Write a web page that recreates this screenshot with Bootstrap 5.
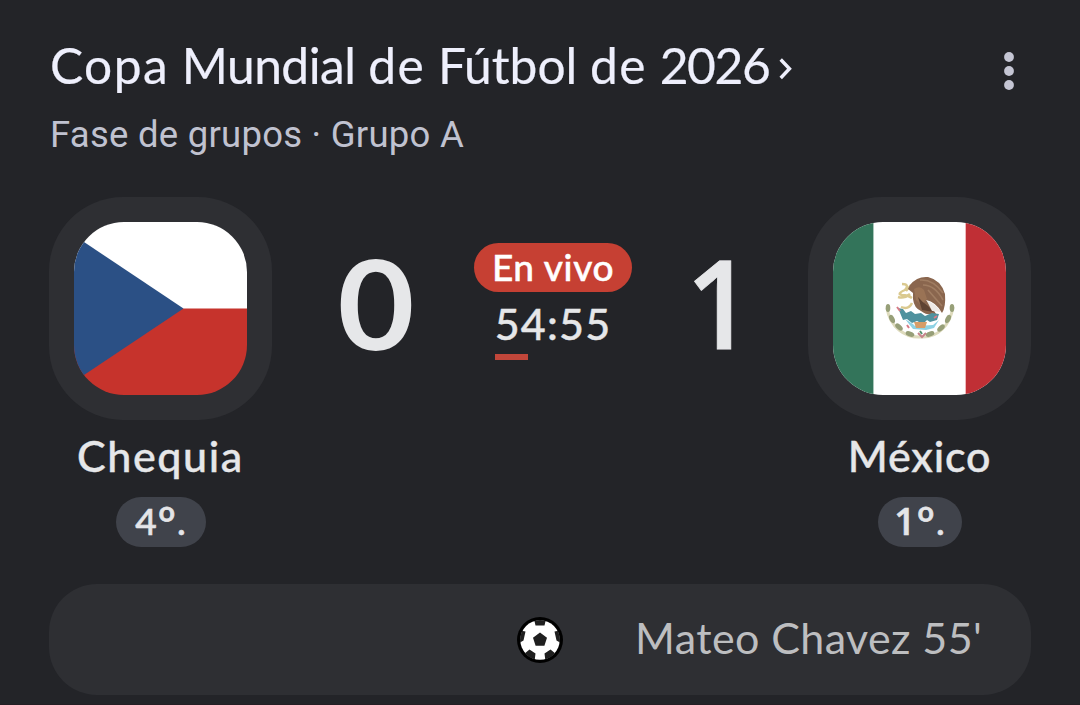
<!DOCTYPE html>
<html lang="es" data-bs-theme="dark">
<head>
<meta charset="utf-8">
<meta name="viewport" content="width=device-width, initial-scale=1">
<title>Chequia - México</title>
<link href="https://cdn.jsdelivr.net/npm/bootstrap@5.3.0/dist/css/bootstrap.min.css" rel="stylesheet">
<style>
body{background:#232428;color:#e6e7e9;font-family:Lato,"Open Sans",sans-serif;height:705px;overflow:hidden;border-bottom:1px solid #241e24}
.page-head{padding:35px 60px 0 50px}
.title{font-size:49.7px;line-height:60px;color:#eeeffc;font-weight:400;white-space:nowrap;-webkit-text-stroke:.2px}
.wide{letter-spacing:1.4px}
.tight{letter-spacing:-.5px}
.year{letter-spacing:-1.400px}
.chev{width:13px;height:24px;margin:7px 0 0 10px}
.stage{font:400 36.5px/44px Roboto,sans-serif;color:#c0c2d0;margin-top:18px;letter-spacing:.25px;white-space:nowrap}
.kebab{width:12px;height:38px;margin:17px 5px 0 0}
.match{padding:0 49px;margin-top:40px}
.team{width:223px}
.crest{width:223px;height:223px;border-radius:74px;background:#2e2f33}
.crest svg{width:173px;height:173px;border-radius:50px}
.team-name{font-size:43px;line-height:52px;margin-top:10px;font-weight:500;-webkit-text-stroke:.4px;white-space:nowrap}
.rank{height:50px;line-height:47px;font-size:37px;margin-top:15px;background:#40434b;font-weight:500;-webkit-text-stroke:.6px;color:#e4e5e8;letter-spacing:1px;text-indent:1px}
.ordinal{font-size:46px;line-height:0;vertical-align:-5px;font-weight:400;-webkit-text-stroke:.8px}
.grotesk{font-family:"Open Sans",sans-serif;font-weight:600}
.scores{padding:45px 54px 0 58px}
.goals{font-size:124px;line-height:120px;font-weight:700;width:92px}
.goals.grotesk{width:70px;line-height:118px;font-weight:600;-webkit-text-stroke:.8px}
.goals span{display:inline-block}
.goals.grotesk span{transform:scaleX(.95)}
.stretch{transform:scaleX(1.070)}
.status{width:158px;margin:1px 0 0 0}
.live{width:158px;height:49px;line-height:47px;font-size:37px;background:#c64033;color:#fff;font-weight:500;-webkit-text-stroke:.5px;letter-spacing:.6px}
.clock{font-size:43px;line-height:50px;margin-top:7px;font-weight:500;-webkit-text-stroke:.4px;letter-spacing:1.200px}
.tick{width:33px;height:6px;background:#c1463a;margin:5px 0 0 21px}
.events{height:111px;margin:37px 49px 0;border-radius:48px;background:#2e2f33}
.ball{width:46px;height:46px;margin-left:-23px}
.scorer{font-size:43px;line-height:52px;color:#bdbec0;padding:0 0 4px 72px;white-space:nowrap;letter-spacing:.4px}
</style>
</head>
<body>
<header class="page-head d-flex justify-content-between align-items-start">
  <div>
    <div class="d-flex align-items-center">
      <h1 class="title m-0"><span class="wide">Copa</span> <span class="tight">Mundial</span> <span class="wide">de</span> Fútbol <span class="wide">de</span> <span class="year">2026</span></h1>
      <svg class="chev" viewBox="0 0 13 24"><path d="M1.700 2.500L10.500 11.700L1.700 21" fill="none" stroke="#eeeffc" stroke-width="3.400"/></svg>
    </div>
    <div class="stage">Fase de grupos · Grupo A</div>
  </div>
  <svg class="kebab flex-shrink-0" viewBox="0 0 12 38" fill="#c5c6d4"><circle cx="6" cy="5" r="4.900"/><circle cx="6" cy="19" r="4.900"/><circle cx="6" cy="33" r="4.900"/></svg>
</header>
<main class="match d-flex justify-content-between">
  <section class="team d-flex flex-column align-items-center">
    <div class="crest d-flex align-items-center justify-content-center">
      <svg viewBox="0 0 173 173"><path fill="#fff" d="M0 0h173v87H0z"/><path fill="#c6332c" d="M0 86.500h173V173H0z"/><path fill="#2b5085" d="M-20 0L10 20L109.500 86.500L10 153L-20 173z"/></svg>
    </div>
    <div class="team-name" style="letter-spacing:1.6px">Chequia</div>
    <div class="rank rounded-pill text-center" style="width:90px">4<span class="ordinal">º</span>.</div>
  </section>
  <section class="scores d-flex flex-grow-1 justify-content-between align-items-start">
    <div class="goals text-center"><span class="stretch">0</span></div>
    <div class="status">
      <div class="live rounded-pill text-center">En vivo</div>
      <div class="clock text-center">54:55</div>
      <div class="tick"></div>
    </div>
    <div class="goals grotesk text-center"><span>1</span></div>
  </section>
  <section class="team d-flex flex-column align-items-center">
    <div class="crest d-flex align-items-center justify-content-center">
      <svg viewBox="0 0 173 173">
        <path fill="#fff" d="M0 0h173v173H0z"/><path fill="#33745a" d="M0 0h40v173H0z"/><path fill="#c02f35" d="M132.500 0H173v173h-40.500z"/>
        <path d="M40.500 0v173" stroke="#a9c6ba"/><path d="M132.500 0v173" stroke="#f0b9bd"/>
        <g transform="translate(42 43)">
          <path d="M12 43C15 62 30 73 46 72C62 73 75 61 78 42" fill="none" stroke="#dedbbd" stroke-width="3"/>
          <g fill="#979f78"><ellipse cx="13" cy="43" rx="2.300" ry="4"/><ellipse cx="17" cy="54" rx="2.500" ry="4.500" transform="rotate(-25 17 54)"/><ellipse cx="24" cy="62" rx="2.500" ry="4.500" transform="rotate(-48 24 62)"/><ellipse cx="35" cy="69" rx="2.500" ry="4.500" transform="rotate(-70 35 69)"/><ellipse cx="77" cy="43" rx="2.300" ry="4"/><ellipse cx="73" cy="54" rx="2.500" ry="4.500" transform="rotate(25 73 54)"/><ellipse cx="66" cy="63" rx="2.500" ry="4.500" transform="rotate(48 66 63)"/><ellipse cx="55" cy="69" rx="2.500" ry="4.500" transform="rotate(70 55 69)"/></g>
          <path d="M27 19q8 0 3 6q-9 4-3 5q6 0 10 3M23 32q6 2 12-3M26 42q8 3 11-4M31 26l5-6" fill="none" stroke="#dac98f" stroke-width="2.400"/>
          <path d="M35 20Q42 11 53 12Q66 15 70 29Q71 42 67 48Q61 37 51 35L58 44L61 49Q52 51 46 46Q39 43 38 34L38 28L33 24z" fill="#8a664e"/>
          <path d="M45 15Q58 14 68 28M48 20Q60 20 68 35M53 25L67 41" fill="none" stroke="#a07d62" stroke-width="1.600"/>
          <path d="M39 24q6-4 10 1l3 9l-6 6l-5-5z" fill="#9a7355"/><path d="M43 32q5 6 10 9l6 6l-12-2z" fill="#5f4332"/>
          <path d="M52 36q8 2 14 11l-9-1z" fill="#eee9e5"/>
          <path d="M23 43l5 1l3 4l5-2l4 3l6-1l4 3l7-3l7 1l-2 6l-7 2l-3-2l-4 4l-6-3l-5 2l-5-4l-4 1z" fill="#4f929e"/>
          <path d="M30 54l8 5l2 2l18-1l6-5l-5 8l-8 2l-13-1z" fill="#8ed2e4"/>
          <path d="M39 57h13l-2 6h-9z" fill="#d79d68"/>
          <path d="M22 42l3 4M32 60l2 3M59 53l3-2" stroke="#d77b86" stroke-width="2"/><path d="M43 68l4 4l4-4" fill="none" stroke="#c5858a" stroke-width="2"/><path d="M45 66l2 3" stroke="#54916d" stroke-width="2"/>
        </g>
      </svg>
    </div>
    <div class="team-name" style="letter-spacing:.8px">México</div>
    <div class="rank rounded-pill text-center" style="width:84px"><span class="grotesk">1</span><span class="ordinal">º</span>.</div>
  </section>
</main>
<section class="events d-flex align-items-center">
  <div class="w-50"></div>
  <svg class="ball flex-shrink-0" viewBox="0 0 46 46"><defs><clipPath id="b"><circle cx="23" cy="23" r="20"/></clipPath></defs><circle cx="23" cy="23" r="23" fill="#000"/><circle cx="23" cy="23" r="19.700" fill="#fff"/><g fill="#1f1f1f" clip-path="url(#b)"><path d="M23 15.500l7 5.200l-2.600 8h-8.800l-2.600-8zM17 2h12l-1.500 6.500h-9zM1 13l7.500 1.500l-2 9l-5 3zM45 13l-7.500 1.500l2 9l5 3zM7 37l5.500-4.500l6 4l-1 8zM39 37l-5.500-4.500l-6 4l1 8z"/></g></svg>
  <div class="scorer">Mateo Chavez 55'</div>
</section>
<script src="https://cdn.jsdelivr.net/npm/bootstrap@5.3.0/dist/js/bootstrap.bundle.min.js"></script>
</body>
</html>
